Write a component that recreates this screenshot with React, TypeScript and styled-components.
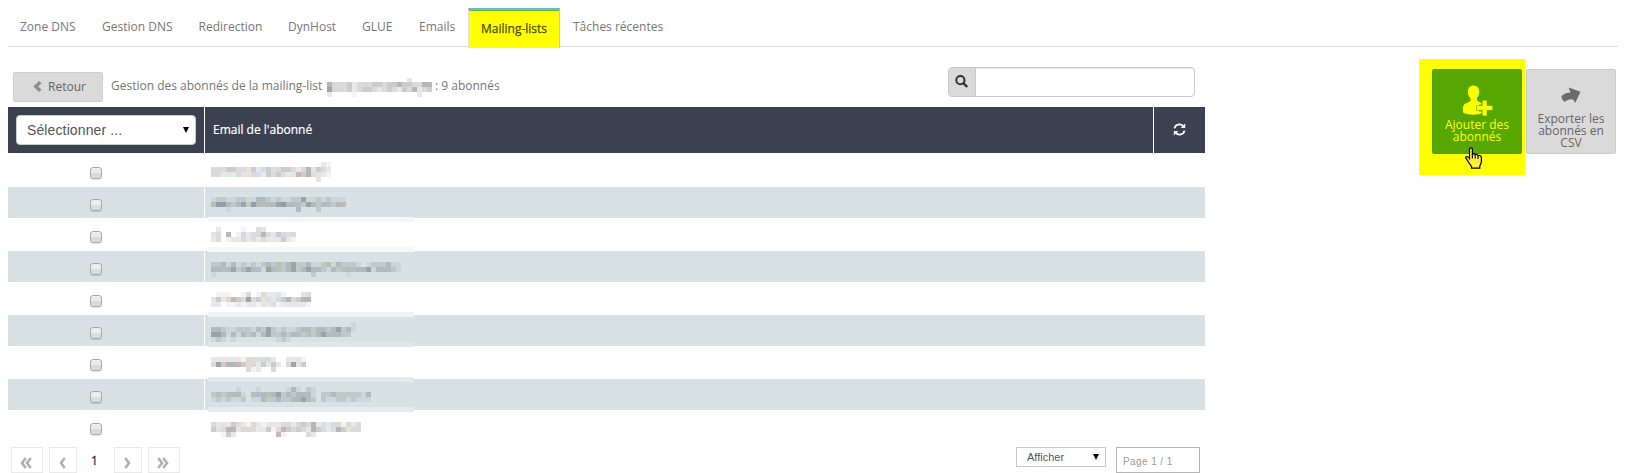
import React from "react";
import styled, { createGlobalStyle } from "styled-components";

const GlobalStyle = createGlobalStyle`
  * { box-sizing: border-box; }
  body {
    margin: 0;
    background: #fff;
    color: #767676;
    font: 12px/16px "Open Sans", "Liberation Sans", sans-serif;
    overflow: hidden;
  }
`;

const Page = styled.div`
  width: 1626px;
  height: 473px;
  padding: 0 8px;
`;

const Nav = styled.nav`
  display: flex;
  height: 47px;
  width: 1610px;
  padding-top: 8px;
  border-bottom: 1px solid #ddd;
`;

const Tab = styled.a<{ $width: number }>`
  width: ${(p) => p.$width}px;
  height: 38px;
  padding: 11px 0 0 12px;
  white-space: nowrap;
`;

const ActiveTab = styled(Tab)`
  height: 40px;
  margin-right: 1px;
  padding: 11px 0 0 12px;
  background: #ff0;
  color: #4d4d00;
  border-top: 2px solid #6cb6d6;
  border-left: 1px solid #ddd;
  border-right: 1px solid #dddd00;
  box-shadow: inset 0 1px 0 #6cb62c;
  -webkit-text-stroke: 0.25px #4d4d00;
`;

const Main = styled.main`
  display: flex;
  justify-content: space-between;
  padding-top: 12px;
`;

const ListPanel = styled.section`
  width: 1197px;
`;

const Toolbar = styled.div`
  display: flex;
  height: 48px;
  padding: 8px 10px 0 5px;
`;

const BackButton = styled.button`
  display: flex;
  align-items: center;
  gap: 6px;
  width: 90px;
  height: 30px;
  margin-top: 5px;
  padding: 0 0 1px 19px;
  border: 1px solid #cfcfcf;
  border-radius: 2px;
  background: #dadada;
  color: #666;
  font: inherit;
`;

const Title = styled.div`
  display: flex;
  margin: 11px 0 0 8px;
  white-space: pre;
`;

const TitleList = styled.span`
  width: 213px;
`;

const Search = styled.div`
  display: flex;
  width: 247px;
  height: 30px;
  margin-left: auto;
  border: 1px solid #c9c9c9;
  border-radius: 4px;
  box-shadow: inset 0 1px 1px rgba(0, 0, 0, 0.08);
  overflow: hidden;
`;

const SearchAddon = styled.span`
  display: flex;
  justify-content: center;
  width: 27px;
  padding: 7px 1px 0 0;
  background: #dadada;
  border-right: 1px solid #c9c9c9;
`;

const HeaderRow = styled.div`
  display: grid;
  grid-template-columns: 196px 948px 51px;
  column-gap: 1px;
  height: 46px;
`;

const HeaderCell = styled.div`
  display: flex;
  align-items: center;
  padding: 0 8px;
  background: #3c4151;
  color: #fff;
  -webkit-text-stroke: 0.2px #fff;
`;

const RefreshCell = styled(HeaderCell)`
  justify-content: center;
  padding: 0 0 2px;
`;

const BulkSelect = styled.div`
  display: flex;
  align-items: center;
  justify-content: space-between;
  width: 180px;
  height: 30px;
  margin-bottom: 1px;
  padding: 1px 6px 0 10px;
  border: 1px solid #ccc;
  border-radius: 4px;
  background: #fff;
  color: #555;
  font: 14px "Liberation Sans", sans-serif;
  letter-spacing: 0.12px;
  -webkit-text-stroke: 0;
`;

const Row = styled.div<{ $height: number; $striped: boolean }>`
  display: grid;
  grid-template-columns: 196px 1000px;
  column-gap: 1px;
  height: ${(p) => p.$height}px;
  & > div { background: ${(p) => (p.$striped ? "#d8e1e4" : "#fff")}; }
`;

const CheckCell = styled.div<{ $top: number }>`
  padding: ${(p) => p.$top}px 0 0 82px;
`;

const Checkbox = styled.span`
  display: block;
  width: 12px;
  height: 12px;
  border: 1px solid #a9a9a9;
  border-radius: 3px;
  background: linear-gradient(#ededed 45%, #dcdcdc 55%);
  box-shadow: 0 1px 1px rgba(0, 0, 0, 0.12);
`;

const EmailCell = styled.div`
  position: relative;
`;

const EmailMask = styled.svg<{ $top: number }>`
  position: absolute;
  left: 3px;
  top: ${(p) => p.$top}px;
  z-index: 1;
`;

const Footer = styled.footer`
  display: flex;
  align-items: flex-start;
  padding: 5px 5px 0 3px;
`;

const PageButton = styled.button<{ $wide?: boolean }>`
  display: flex;
  align-items: center;
  justify-content: center;
  width: ${(p) => (p.$wide ? 32 : 28)}px;
  height: 26px;
  margin-right: 6px;
  padding: 5px 2px 0 0;
  border: 1px solid #e9e9e9;
  background: #fff;
`;

const CurrentPage = styled.span`
  width: 31px;
  padding: 6px 0 0 8px;
  color: #333;
  -webkit-text-stroke: 0.3px #333;
`;

const SizeSelect = styled.div`
  display: flex;
  align-items: center;
  justify-content: space-between;
  width: 90px;
  height: 20px;
  margin-left: auto;
  padding: 0 6px 0 10px;
  border: 1px solid #c8c8c8;
  color: #555;
  font: 11px "Liberation Sans", sans-serif;
`;

const PageInput = styled.div`
  width: 84px;
  height: 26px;
  margin-left: 10px;
  padding: 8px 0 0 6px;
  border: 1px solid #b4b4b4;
  color: #999;
  font: 10px/12px "Liberation Sans", sans-serif;
  letter-spacing: 0.4px;
`;

const Actions = styled.aside`
  display: flex;
  align-items: flex-start;
  gap: 1px;
  margin-right: 2px;
`;

const Highlight = styled.div`
  position: relative;
  width: 106px;
  height: 116px;
  padding: 10px 3px 0 13px;
  background: #ff0;
`;

const ActionButton = styled.button<{ $primary?: boolean }>`
  display: flex;
  flex-direction: column;
  align-items: center;
  width: 90px;
  height: 85px;
  margin: ${(p) => (p.$primary ? "0" : "10px 0 0")};
  padding: ${(p) => (p.$primary ? "15px 8px 0" : "17px 8px 0")};
  border: 1px solid ${(p) => (p.$primary ? "#4e9f00" : "#cdcdcd")};
  border-radius: 2px;
  background: ${(p) => (p.$primary ? "#56a700" : "#dadada")};
  color: ${(p) => (p.$primary ? "#ff0" : "#666")};
  font: 12px/12px "Open Sans", sans-serif;
  text-align: center;
`;

const ActionLabel = styled.span<{ $gap: number }>`
  margin-top: ${(p) => p.$gap}px;
`;

const Cursor = styled.svg`
  position: absolute;
  left: 46px;
  top: 88px;
`;

// Shades of the blocks that hide the private addresses.
const SHADES: Record<string, string> = {
  a: "#f3f3f4", b: "#e8e8e8", c: "#dadada", d: "#cacccd", e: "#b7b7b9", f: "#a5a2a5",
  g: "#e7e5da", h: "#d9dde8", i: "#e2dad8", j: "#dce7e8", s: "#c8b8b0",
  k: "#cdd6d9", l: "#bec9ca", m: "#afbbbf", n: "#9aa4a3", o: "#939eaa", p: "#b7bfb6", q: "#b3bccb",
};

const Blocks = ({ rows, x, y }: { rows: string[]; x: number; y: number }) => (
  <g shapeRendering="crispEdges">
    {rows.map((row, r) =>
      row.split("").map((shade, c) =>
        SHADES[shade] ? (
          <rect key={`${r}-${c}`} x={x + c * 5} y={y + r * 5} width={5} height={5} fill={SHADES[shade]} />
        ) : null
      )
    )}
  </g>
);

interface Subscriber {
  height: number;
  check: number;
  mask: number;
  rows: string[];
  bands?: [number, string][];
}

const SUBSCRIBERS: Subscriber[] = [
  { height: 34, check: 14, mask: 9, rows: ["......................ba", "cciddicgdbcdhcddibcegdib", "ccbjbcggchbdcdibjsdehgba", ".....................j.."] },
  { height: 31, check: 12, mask: 5, rows: ["", "kllkkllkkmmlklkkllnkklklkkk", "poomlmnlomsmmnommqlnmlmqlms", "...k.............m...l....."] },
  { height: 33, check: 13, mask: 4, rows: ["", ".b....a..ij......", "gh.e.acbhcecbdchc", "bh.abbibhbibbbdba"], bands: [[-1, "#f6f8f8"], [29, "#f6f8f8"]] },
  { height: 31, check: 12, mask: 6, rows: ["", "llmkmklklklmlplmnllmkklpkmlllk.klllmkk", "mmpmnlmnmqknmplmnlmnmmlkmlpmpmmnkmmmlk", "k...................l......k"] },
  { height: 33, check: 13, mask: 5, rows: ["", ".aaa..ac.acbbja...gh", "gdbcsdcfcdghbcdecdeeeg", "bb.aababbagbhabbbbba"].map((r) => r.slice(0, 20)), bands: [[30, "#edf1f2"]] },
  { height: 31, check: 12, mask: 7, rows: ["............................k", "mmlkklllkmlnlklkklmmlmmlmnlmk", "nnmkmkmlmkmnllmlmqlplmnmmmll.", "klk.k........klk....."], bands: [[27, "#e0e7e9"]] },
  { height: 33, check: 13, mask: 6, rows: ["", "bbbbbbacchccb..bbga", "cfdeesdicbdbdb.cfgd", ".......cab..c......"], bands: [[31, "#e4eaed"]] },
  { height: 31, check: 12, mask: 8, rows: [".....k...k.....kmk.lk", "lplpmmk.pqmpmnlmlmmm.lklmlllllkm".replace(".lk", "k.l"), "klklkkl.kkmllmllmmnml.lkkllklkkk"], bands: [[28, "#e6ecee"]] },
  { height: 32, check: 13, mask: 7, rows: ["", "cbgbdibacbabjbccbcdcebhbccacbc", "dgieegccibbdacsdcdcbedcbhedgci", "..adb........sa....cb"] },
];

const TITLE_MASK = ["................b", "ecccdbcccddcddeddccee", "fcccdbcddcbcdcbdcebcd", "b....a............b"];

const Arrow = ({ size = 6 }: { size?: number }) => (
  <svg width={size} height={size} viewBox="0 0 6 6">
    <path d="M0 0H6L3 6Z" fill="#000" />
  </svg>
);

const Chevrons = ({ double, flip }: { double?: boolean; flip?: boolean }) => (
  <svg width={double ? 12 : 7} height="12" viewBox={double ? "0 0 12 12" : "0 0 7 12"}>
    <g fill="none" stroke="#b0b0b0" strokeWidth="2.6" transform={flip ? `translate(${double ? 12 : 7} 0) scale(-1 1)` : undefined}>
      <path d="M5.8 1L2 6L5.8 11" />
      {double && <path d="M10.8 1L7 6L10.8 11" />}
    </g>
  </svg>
);

const TABS_BEFORE: [string, number][] = [
  ["Zone DNS", 82], ["Gestion DNS", 96.5], ["Redirection", 89.5], ["DynHost", 74], ["GLUE", 57], ["Emails", 61],
];

export default function App() {
  return (
    <Page>
      <GlobalStyle />
      <Nav>
        {TABS_BEFORE.map(([label, width]) => (
          <Tab key={label} $width={width}>{label}</Tab>
        ))}
        <ActiveTab $width={92}>Mailing-lists</ActiveTab>
        <Tab $width={115}>Tâches récentes</Tab>
      </Nav>
      <Main>
        <ListPanel>
          <Toolbar>
            <BackButton>
              <svg width="9" height="11" viewBox="0 0 9 11">
                <path d="M6 0L8.6 2.2L5.3 5.5L8.6 8.8L6 11L0.4 5.5Z" fill="#8d8d8d" />
              </svg>
              Retour
            </BackButton>
            <Title>
              <TitleList>Gestion des abonnés de la mailing-list</TitleList>
              <svg width="111" height="20" viewBox="0 0 111 20">
                <Blocks rows={TITLE_MASK} x={3} y={-1} />
              </svg>
              <span>: 9 abonnés</span>
            </Title>
            <Search>
              <SearchAddon>
                <svg width="13" height="13" viewBox="0 0 13 13" fill="none" stroke="#333">
                  <circle cx="5.4" cy="5.2" r="4.1" strokeWidth="2" />
                  <path d="M8.3 8.2L11.6 11.3" strokeWidth="2.4" strokeLinecap="round" />
                </svg>
              </SearchAddon>
            </Search>
          </Toolbar>
          <HeaderRow>
            <HeaderCell>
              <BulkSelect>
                Sélectionner ...
                <Arrow />
              </BulkSelect>
            </HeaderCell>
            <HeaderCell>Email de l'abonné</HeaderCell>
            <RefreshCell>
              <svg width="13" height="13" viewBox="0 0 13 13" fill="none" stroke="#fff" strokeWidth="1.8">
                <path d="M1.5 5.4A5 5 0 0 1 10.2 3.2" />
                <path d="M11.5 7.6A5 5 0 0 1 2.8 9.8" />
                <path d="M12.2 0.6V5.1H7.7Z" fill="#fff" stroke="none" />
                <path d="M0.8 12.4V7.9H5.3Z" fill="#fff" stroke="none" />
              </svg>
            </RefreshCell>
          </HeaderRow>
          {SUBSCRIBERS.map((s, i) => (
            <Row key={i} $height={s.height} $striped={i % 2 === 1}>
              <CheckCell $top={s.check}><Checkbox /></CheckCell>
              <EmailCell>
                <EmailMask $top={s.mask} width="206" height="22" viewBox="0 0 206 22" overflow="visible">
                  {s.bands?.map(([y, fill]) => (
                    <rect key={y} x="0" y={y - s.mask} width="206" height="5" fill={fill} />
                  ))}
                  <Blocks rows={s.rows} x={3} y={0} />
                </EmailMask>
              </EmailCell>
            </Row>
          ))}
          <Footer>
            <PageButton $wide><Chevrons double /></PageButton>
            <PageButton><Chevrons /></PageButton>
            <CurrentPage>1</CurrentPage>
            <PageButton><Chevrons flip /></PageButton>
            <PageButton $wide><Chevrons double flip /></PageButton>
            <SizeSelect>
              Afficher
              <Arrow />
            </SizeSelect>
            <PageInput>Page 1 / 1</PageInput>
          </Footer>
        </ListPanel>
        <Actions>
          <Highlight>
            <ActionButton $primary>
              <svg width="31" height="31" viewBox="0 0 31 31">
                <path d="M11.5 0.5C15.3 0.5 17.4 3.3 17.2 7C17.1 9.8 16 11.5 15 13C14.4 15 15.4 16 17.5 17L19.5 18V19.5H17V26.5H20.5V28C15 30.3 6 30.2 1.2 27.8C0.4 22.5 1 19.8 4 18.3C6.5 17 8.9 16.5 8.7 14.2C8.6 13 6 11 5.9 7C5.8 3.2 7.9 0.5 11.5 0.5Z" fill="#ff0" />
                <path d="M20.3 15.2H25V20.6H30.7V25.3H25V31H20.3V25.3H14.6V20.6H20.3Z" fill="#ff0" stroke="#56a700" strokeWidth="0.6" />
              </svg>
              <ActionLabel $gap={3}>Ajouter des abonnés</ActionLabel>
            </ActionButton>
            <Cursor width="18" height="22" viewBox="0 0 18 22">
              <path d="M5 1.2C6.2 0.4 7.4 1 7.4 2.6V7.2C8.6 6.2 9.8 6.6 10.2 7.8C11.4 7 12.6 7.4 13 8.7C14.6 8 16.4 9 16.4 11V14.5C16.4 16.5 15.2 17.5 14.8 19V21.2H6.5V19.5C5.2 17.5 3.6 15.8 2.5 13.5C1.4 11.8 0.4 11 0.8 10.2C1.6 9.2 3.4 9.7 4.5 11.5V2.5Z" fill="#ffed3a" stroke="#000" strokeWidth="1.2" />
              <path d="M7.4 7V11.5M10.2 8V11.5M13 9V12" stroke="#000" strokeWidth="1.1" />
            </Cursor>
          </Highlight>
          <ActionButton>
            <svg width="20" height="17" viewBox="0 0 20 17">
              <path d="M7.6 0.6L19.5 4.8L14.2 16L12.2 12.4C9.3 11.9 6.6 12.6 3.8 14.8C1.7 13.8 0.4 11.8 0.5 9.3C3.2 6.3 6.3 5.4 9.6 5.4Z" fill="#6b6b6b" />
            </svg>
            <ActionLabel $gap={9}>Exporter les abonnés en CSV</ActionLabel>
          </ActionButton>
        </Actions>
      </Main>
    </Page>
  );
}
